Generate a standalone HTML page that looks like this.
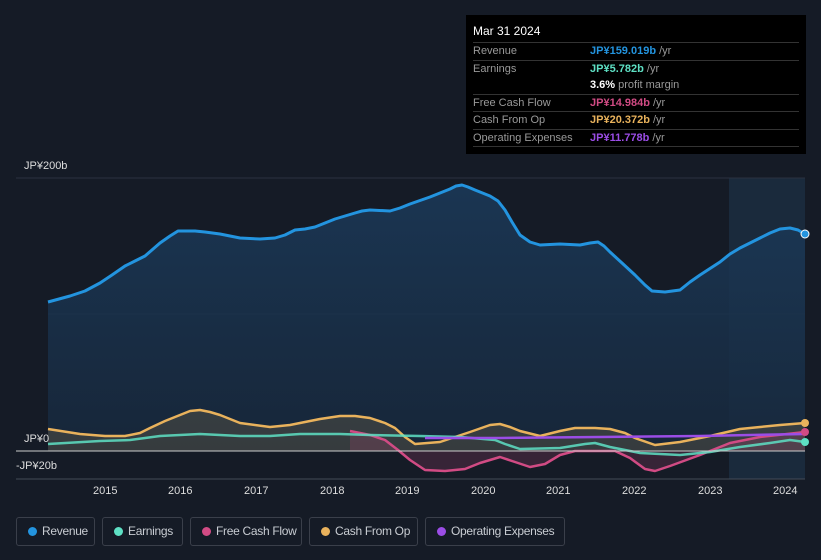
<!DOCTYPE html>
<html><head><meta charset="utf-8"><style>
html,body{margin:0;width:821px;height:560px;background:#151b26;font-family:"Liberation Sans",sans-serif;overflow:hidden;position:relative}
.tip{position:absolute;left:466px;top:15px;width:340px;height:139px;background:#000;box-sizing:border-box;padding:9px 7px 0 7px;font-size:11px;color:#999}
.tip .h{color:#fff;font-size:12px;padding-bottom:4px;border-bottom:1px solid #333}
.r{display:flex;height:16.5px;line-height:16.5px;border-bottom:1px solid #333}
.r .l{width:117px}
.nb{border-bottom:none}
.leg{position:absolute;top:517px;height:29px;border:1px solid #3a3f4a;border-radius:3px;box-sizing:border-box;color:#c8ccd2;font-size:12px;line-height:27px;padding-left:25px;white-space:nowrap;letter-spacing:-0.3px}
.leg i{position:absolute;left:11px;top:9px;width:9px;height:9px;border-radius:50%}
.ax{position:absolute;color:#ddd;font-size:11px}
</style></head><body>
<svg width="821" height="560" style="position:absolute;left:0;top:0">
<defs><linearGradient id="g" x1="0" y1="0" x2="0" y2="1"><stop offset="0" stop-color="#1b3a5a"/><stop offset="1" stop-color="#17283c"/></linearGradient></defs>
<rect x="729" y="178" width="76" height="301" fill="#1a2a3c"/>
<line x1="48" y1="314" x2="805" y2="314" stroke="#2a3240" stroke-width="1"/>
<line x1="16" y1="178" x2="805" y2="178" stroke="#2a3240" stroke-width="1"/>
<path d="M48,302 L70,296 L85,291 L100,283 L112,275 L125,266 L135,261 L145,256 L160,243 L170,236 L178,231 L195,231 L205,232 L220,234 L240,238 L260,239 L275,238 L285,235 L295,230 L305,229 L315,227 L325,223 L335,219 L355,213 L362,211 L370,210 L390,211 L400,208 L410,204 L430,197 L450,189 L456,186 L462,185 L468,187 L475,190 L490,196 L498,201 L505,210 L512,222 L520,235 L530,242 L540,245 L560,244 L580,245 L590,243 L598,242 L604,246 L610,252 L622,263 L635,275 L645,285 L652,291 L665,292 L680,290 L690,282 L700,275 L720,262 L730,254 L740,248 L760,238 L770,233 L780,229 L790,228 L798,230 L805,234 L805,451 L48,451Z" fill="url(#g)" opacity=".85"/>
<path d="M48,302 L70,296 L85,291 L100,283 L112,275 L125,266 L135,261 L145,256 L160,243 L170,236 L178,231 L195,231 L205,232 L220,234 L240,238 L260,239 L275,238 L285,235 L295,230 L305,229 L315,227 L325,223 L335,219 L355,213 L362,211 L370,210 L390,211 L400,208 L410,204 L430,197 L450,189 L456,186 L462,185 L468,187 L475,190 L490,196 L498,201 L505,210 L512,222 L520,235 L530,242 L540,245 L560,244 L580,245 L590,243 L598,242 L604,246 L610,252 L622,263 L635,275 L645,285 L652,291 L665,292 L680,290 L690,282 L700,275 L720,262 L730,254 L740,248 L760,238 L770,233 L780,229 L790,228 L798,230 L805,234" fill="none" stroke="#2394df" stroke-width="3" stroke-linejoin="round"/>
<path d="M48,429 L80,434 L105,436 L125,436 L140,433 L150,428 L165,421 L175,417 L190,411 L200,410 L210,412 L220,415 L240,423 L270,427 L290,425 L300,423 L320,419 L340,416 L355,416 L370,418 L385,423 L395,428 L405,437 L415,444 L440,442 L470,432 L490,425 L500,424 L510,427 L520,431 L540,436 L560,431 L575,428 L595,428 L610,429 L625,433 L635,438 L655,445 L680,442 L710,436 L740,429 L760,427 L780,425 L805,423 L805,451 L48,451Z" fill="#e9b25c" opacity=".15"/>
<path d="M48,429 L80,434 L105,436 L125,436 L140,433 L150,428 L165,421 L175,417 L190,411 L200,410 L210,412 L220,415 L240,423 L270,427 L290,425 L300,423 L320,419 L340,416 L355,416 L370,418 L385,423 L395,428 L405,437 L415,444 L440,442 L470,432 L490,425 L500,424 L510,427 L520,431 L540,436 L560,431 L575,428 L595,428 L610,429 L625,433 L635,438 L655,445 L680,442 L710,436 L740,429 L760,427 L780,425 L805,423" fill="none" stroke="#e9b25c" stroke-width="2.5" stroke-linejoin="round"/>
<path d="M350,431 L370,435 L385,440 L398,450 L410,460 L425,470 L445,471 L465,469 L480,463 L500,457 L515,462 L530,467 L545,464 L560,455 L575,451 L600,451 L615,451 L630,458 L645,469 L655,471 L670,466 L700,455 L730,443 L760,437 L805,432 L805,451 L350,451Z" fill="#d14b84" opacity=".18"/>
<path d="M350,431 L370,435 L385,440 L398,450 L410,460 L425,470 L445,471 L465,469 L480,463 L500,457 L515,462 L530,467 L545,464 L560,455 L575,451 L600,451 L615,451 L630,458 L645,469 L655,471 L670,466 L700,455 L730,443 L760,437 L805,432" fill="none" stroke="#d14b84" stroke-width="2.5" stroke-linejoin="round"/>
<path d="M48,444 L100,441 L130,440 L160,436 L200,434 L240,436 L270,436 L300,434 L340,434 L370,435 L420,436 L460,437 L495,440 L505,444 L520,449 L560,448 L585,444 L595,443 L610,447 L640,453 L680,455 L710,452 L740,447 L770,443 L790,440 L805,442" fill="none" stroke="#5ee0c4" stroke-width="2.5" opacity=".85" stroke-linejoin="round"/>
<path d="M425,438 L500,438 L600,437 L700,436 L750,435 L805,434" fill="none" stroke="#9b4de6" stroke-width="2.5"/>
<line x1="16" y1="451" x2="805" y2="451" stroke="#ccc" stroke-width="1"/>
<line x1="16" y1="479" x2="805" y2="479" stroke="#444b57" stroke-width="1"/>
<circle cx="805" cy="234" r="4" fill="#2394df" stroke="#fff" stroke-width="1"/>
<circle cx="805" cy="423" r="4" fill="#e9b25c"/>
<circle cx="805" cy="432" r="4" fill="#d14b84"/>
<circle cx="805" cy="442" r="4" fill="#5ee0c4"/>
</svg>
<div class="ax" style="left:24px;top:160px">JP¥200b</div>
<div class="ax" style="left:24px;top:433px">JP¥0</div>
<div class="ax" style="left:16px;top:460px">-JP¥20b</div>
<div class="ax" style="left:93px;top:485px">2015</div>
<div class="ax" style="left:168px;top:485px">2016</div>
<div class="ax" style="left:244px;top:485px">2017</div>
<div class="ax" style="left:320px;top:485px">2018</div>
<div class="ax" style="left:395px;top:485px">2019</div>
<div class="ax" style="left:471px;top:485px">2020</div>
<div class="ax" style="left:546px;top:485px">2021</div>
<div class="ax" style="left:622px;top:485px">2022</div>
<div class="ax" style="left:698px;top:485px">2023</div>
<div class="ax" style="left:773px;top:485px">2024</div>
<div class="tip">
<div class="h">Mar 31 2024</div>
<div class="r"><span class="l">Revenue</span><span><b style="color:#2394df">JP¥159.019b</b> /yr</span></div>
<div class="r nb"><span class="l">Earnings</span><span><b style="color:#5ee0c4">JP¥5.782b</b> /yr</span></div>
<div class="r"><span class="l"></span><span><b style="color:#fff">3.6%</b> profit margin</span></div>
<div class="r"><span class="l">Free Cash Flow</span><span><b style="color:#d14b84">JP¥14.984b</b> /yr</span></div>
<div class="r"><span class="l">Cash From Op</span><span><b style="color:#e9b25c">JP¥20.372b</b> /yr</span></div>
<div class="r"><span class="l">Operating Expenses</span><span><b style="color:#9b4de6">JP¥11.778b</b> /yr</span></div>
</div>
<div class="leg" style="left:16px;width:79px"><i style="background:#2394df"></i>Revenue</div>
<div class="leg" style="left:102px;width:81px"><i style="background:#5ee0c4"></i>Earnings</div>
<div class="leg" style="left:190px;width:112px"><i style="background:#d14b84"></i>Free Cash Flow</div>
<div class="leg" style="left:309px;width:109px"><i style="background:#e9b25c"></i>Cash From Op</div>
<div class="leg" style="left:425px;width:140px"><i style="background:#9b4de6"></i>Operating Expenses</div>
</body></html>
